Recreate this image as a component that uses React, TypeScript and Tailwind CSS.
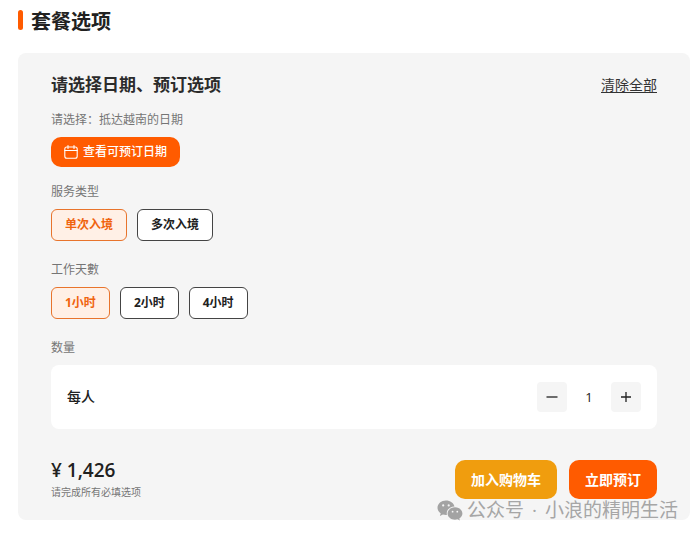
import React, { useState } from "react";

const SERVICE_TYPES = ["单次入境", "多次入境"];
const WORK_TIMES = ["1小时", "2小时", "4小时"];

interface OptionGroupProps {
  label: string;
  options: string[];
  value: string;
  onChange: (value: string) => void;
}

const OptionGroup: React.FC<OptionGroupProps> = ({ label, options, value, onChange }) => (
  <div role="group" aria-label={label}>
    <p className="text-[12px] leading-4 text-[#757575]">{label}</p>
    <div className="mt-[9px] flex flex-wrap gap-[10px]">
      {options.map((option) => (
        <button
          key={option}
          type="button"
          aria-pressed={option === value}
          onClick={() => onChange(option)}
          className={
            option === value
              ? "h-8 rounded-md border border-[#e8742c] bg-[#fff0e6] px-[13px] text-[12px] leading-4 font-bold text-[#f0640f]"
              : "h-8 rounded-md border border-[#444444] bg-white px-[13px] text-[12px] leading-4 font-bold text-[#212121]"
          }
        >
          {option}
        </button>
      ))}
    </div>
  </div>
);

const CalendarIcon = () => (
  <svg viewBox="0 0 14 14" className="size-[14px]" fill="none" stroke="currentColor" strokeWidth="1.1" strokeLinecap="round">
    <rect x="0.8" y="2" width="12.4" height="11.2" rx="2" />
    <path d="M0.8 5.5H13.2M4 0.6V3.4M10 0.6V3.4" />
  </svg>
);

const WechatIcon = () => (
  <svg viewBox="0 0 26 21" className="h-[21px] w-[26px]">
    <path
      fill="#a3a3a3"
      d="M9 0.5C4.3 0.5 0.5 3.7 0.5 7.7c0 2.3 1.2 4.2 3.2 5.6L2.9 15.9l3-1.5c1 .3 2 .5 3.1.5h.9C8.9 10.3 12.600 6.500 17.500 6.400C16.700 2.900 13.200.5 9 .5Z"
    />
    <path
      fill="#a3a3a3"
      d="M18 7.3c-4.1 0-7.4 2.8-7.4 6.2s3.3 6.2 7.4 6.2c.9 0 1.7-.1 2.5-.4l2.4 1.3-.6-2.2c1.9-1.2 3.1-2.900 3.1-4.900 0-3.400-3.300-6.200-7.400-6.200Z"
    />
    <g fill="#f5f5f5">
      <circle cx="6.2" cy="5.4" r="1.1" />
      <circle cx="11.7" cy="5.4" r="1.1" />
      <circle cx="15.6" cy="11.7" r="0.9" />
      <circle cx="20.3" cy="11.7" r="0.9" />
    </g>
  </svg>
);

const App: React.FC = () => {
  const [serviceType, setServiceType] = useState(SERVICE_TYPES[0]);
  const [workTime, setWorkTime] = useState(WORK_TIMES[0]);
  const [count, setCount] = useState(1);

  const clearAll = () => {
    setServiceType(SERVICE_TYPES[0]);
    setWorkTime(WORK_TIMES[0]);
    setCount(1);
  };

  return (
    <main className="bg-white pt-[10px] pr-[10px] pb-[18px] pl-[18px] font-['Open_Sans','Noto_Sans_CJK_SC',sans-serif]">
      <div className="flex items-start gap-2">
        <span className="h-5 w-[5px] rounded-full bg-[#ff5b00]"></span>
        <h1 className="text-[20px] leading-6 font-bold text-[#212121]">套餐选项</h1>
      </div>

      <section className="relative mt-[19px] rounded-lg bg-[#f5f5f5] px-[33px] py-5">
        <div className="flex items-center justify-between">
          <h2 className="text-[17px] leading-6 font-bold text-[#2b2b2b]">请选择日期、预订选项</h2>
          <button type="button" onClick={clearAll} className="text-[14px] leading-5 text-[#333333] underline underline-offset-2">
            清除全部
          </button>
        </div>

        {/* Date */}
        <p className="mt-[15px] text-[12px] leading-4 text-[#757575]">请选择：抵达越南的日期</p>
        <button
          type="button"
          className="mt-[9px] flex h-[30px] items-center gap-[5px] rounded-[10px] bg-[#ff5b00] px-[13px] text-[12px] leading-4 font-medium text-white"
        >
          <CalendarIcon />
          查看可预订日期
        </button>

        <div className="mt-[17px] flex flex-col gap-[21px]">
          <OptionGroup label="服务类型" options={SERVICE_TYPES} value={serviceType} onChange={setServiceType} />
          <OptionGroup label="工作天數" options={WORK_TIMES} value={workTime} onChange={setWorkTime} />
        </div>

        {/* Quantity */}
        <p className="mt-[21px] text-[12px] leading-4 text-[#757575]">数量</p>
        <div className="mt-[9px] flex items-center justify-between rounded-lg bg-white px-4 py-[17px]">
          <span className="text-[14px] leading-5 font-medium text-[#212121]">每人</span>
          <div className="flex items-center">
            <button
              type="button"
              aria-label="减少"
              onClick={() => setCount(Math.max(1, count - 1))}
              className="flex size-[30px] items-center justify-center rounded-sm bg-[#f5f5f5] text-[#212121]"
            >
              <svg viewBox="0 0 12 12" className="size-3" stroke="currentColor" strokeWidth="1.3">
                <path d="M0.5 6H11.5" />
              </svg>
            </button>
            <span className="w-11 text-center text-[13px] leading-5 text-[#212121]">{count}</span>
            <button
              type="button"
              aria-label="增加"
              onClick={() => setCount(count + 1)}
              className="flex size-[30px] items-center justify-center rounded-sm bg-[#f5f5f5] text-[#212121]"
            >
              <svg viewBox="0 0 12 12" className="size-3" stroke="currentColor" strokeWidth="1.3">
                <path d="M1 6H11M6 1V11" />
              </svg>
            </button>
          </div>
        </div>

        {/* Footer */}
        <div className="mt-[31px] flex items-start justify-between">
          <div>
            <p className="text-[19px] leading-5 font-semibold text-[#212121]">¥ 1,426</p>
            <p className="mt-1 text-[10px] leading-4 text-[#757575]">请完成所有必填选项</p>
          </div>
          <div className="flex gap-3">
            <button type="button" className="h-[39px] rounded-[10px] bg-[#f09d0e] px-4 text-[14px] leading-5 font-bold text-white">
              加入购物车
            </button>
            <button type="button" className="h-[39px] rounded-[10px] bg-[#ff5b00] px-4 text-[14px] leading-5 font-bold text-white">
              立即预订
            </button>
          </div>
        </div>

        {/* Account watermark over the card */}
        <div className="pointer-events-none absolute right-3 -bottom-1 flex items-center gap-1 text-[19px] leading-7 text-[#a6a6a6]">
          <WechatIcon />
          <p className="flex gap-2">
            <span>公众号</span>
            <span>·</span>
            <span>小浪的精明生活</span>
          </p>
        </div>
      </section>
    </main>
  );
};

export default App;
